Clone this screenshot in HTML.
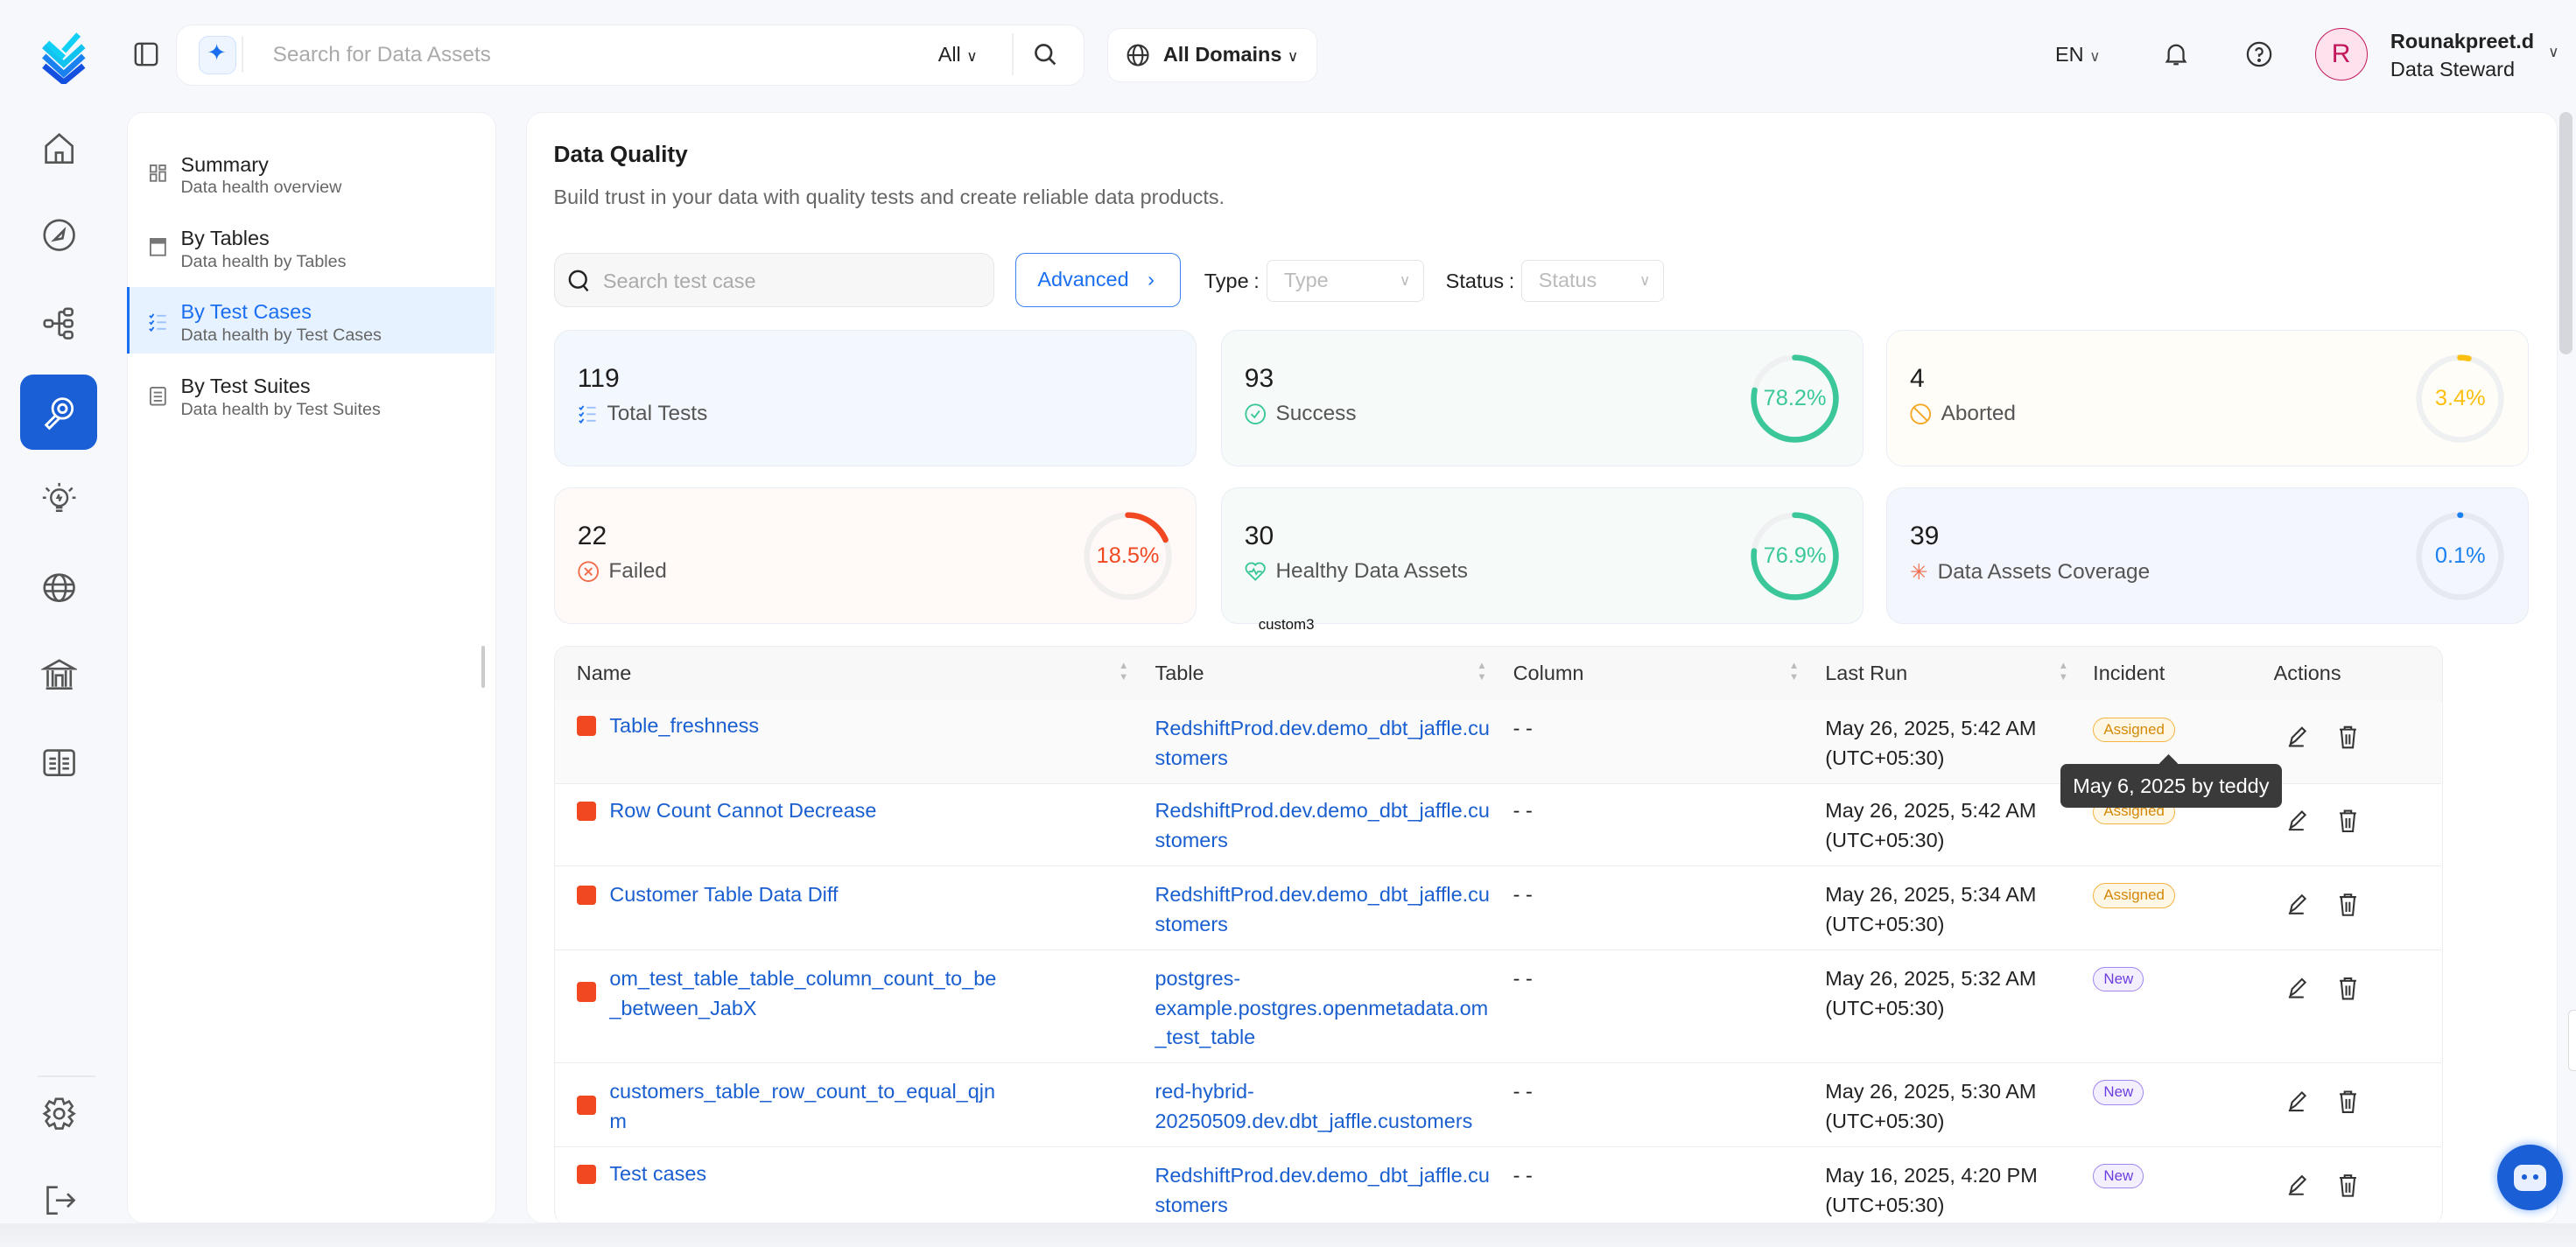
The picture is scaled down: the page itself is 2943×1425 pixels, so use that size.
<!DOCTYPE html>
<html><head><meta charset="utf-8"><style>
html,body{margin:0;padding:0;}
body{width:1568px;height:759px;overflow:hidden;zoom:1.876913;background:#f6f8fc;font-family:"Liberation Sans",sans-serif;color:#222;position:relative;}
.a{position:absolute;}
.ic{position:absolute;width:22px;height:22px;}
svg{display:block}
.box{background:#fff;border-radius:10px;}
.nav-i{left:25px;}
.mi .t{font-size:12.5px;color:#222}
.mi .s{font-size:10.5px;color:#666;margin-top:1px}
.card{position:absolute;border-radius:10px;border:1px solid #e8edf5;height:82px;width:390px;}
.card .n{position:absolute;left:14px;top:20px;font-size:16px;color:#1d1d1d}
.card .l{position:absolute;left:14px;top:43px;font-size:13px;color:#555;display:flex;align-items:center;gap:6px}
.ring{position:absolute;right:13px;top:13px;width:56px;height:56px}
.ring span{position:absolute;left:0;top:0;width:56px;height:56px;line-height:56px;text-align:center;font-size:13.5px}
.th{position:absolute;top:403px;font-size:12.5px;color:#333}
.row{position:absolute;left:338px;width:1148px;border-bottom:1px solid #ececec;font-size:12.5px}
.row .c{position:absolute;top:8px;line-height:18px}
.lk{color:#1a5fd0}
.sq{position:absolute;left:13px;width:12px;height:12px;border-radius:2px;background:#f24822}
.badge{display:inline-block;font-size:9px;padding:1px 6px;border-radius:8px;line-height:12px}
.as{background:#fff7e6;border:1px solid #f5b340;color:#d48806}
.nw{background:#f4efff;border:1px solid #a385f0;color:#6b3fe0}
</style></head><body>

<svg class="a" style="left:21px;top:17px" width="36" height="34" viewBox="0 0 36 34"><path d="M6 11 L18 22 L30 11" fill="none" stroke="#12c3f0" stroke-width="3.5"/><path d="M6 17 L18 28 L30 17" fill="none" stroke="#1a82f0" stroke-width="3.5"/><path d="M6 23 L18 33 L30 23" fill="none" stroke="#1450e0" stroke-width="3.5"/><path d="M8 9 L18 18" stroke="#10d0f5" stroke-width="3.5"/><path d="M18 14 L27 4" stroke="#10d0f5" stroke-width="3.5"/></svg>

<svg class="ic nav-i" style="top:80px" viewBox="0 0 22 22" fill="none" stroke="#555" stroke-width="1.4"><path d="M3 9 L11 2 L19 9 V19 H3Z"/><path d="M9 19 V13 H13 V19"/></svg>
<svg class="ic nav-i" style="top:132px" viewBox="0 0 22 22" fill="none" stroke="#555" stroke-width="1.4"><circle cx="11" cy="11" r="9"/><path d="M8 14 L14 8 L13 13Z"/></svg>
<svg class="ic nav-i" style="top:186px" viewBox="0 0 22 22" fill="none" stroke="#555" stroke-width="1.4"><rect x="2" y="9" width="5" height="4" rx="1.5"/><rect x="14" y="2" width="5" height="4" rx="1.5"/><rect x="14" y="9" width="5" height="4" rx="1.5"/><rect x="14" y="16" width="5" height="4" rx="1.5"/><path d="M7 11 H14 M11 4 V18 M11 4 H14 M11 18 H14"/></svg>
<div class="a" style="left:12px;top:228px;width:47px;height:46px;border-radius:8px;background:#1a5fd6"></div>
<svg class="ic nav-i" style="top:240px" viewBox="0 0 22 22" fill="none" stroke="#fff" stroke-width="1.5"><circle cx="13" cy="9" r="6"/><circle cx="13" cy="9" r="2.5"/><path d="M9 13 L3 19 L5 21 L11 15"/></svg>
<svg class="ic nav-i" style="top:293px" viewBox="0 0 22 22" fill="none" stroke="#555" stroke-width="1.3"><circle cx="11" cy="10" r="5"/><path d="M9 16 H13 M9 18 H13 M11 1 V3 M3 4 L5 6 M19 4 L17 6 M1 10 H3 M19 10 H21 M11 8 L10 10 H12 L11 12"/></svg>
<svg class="ic nav-i" style="top:347px" viewBox="0 0 22 22" fill="none" stroke="#555" stroke-width="1.4"><ellipse cx="11" cy="11" rx="9" ry="8"/><ellipse cx="11" cy="11" rx="4" ry="8"/><path d="M2 9 H20 M2 13 H20"/></svg>
<svg class="ic nav-i" style="top:400px" viewBox="0 0 22 22" fill="none" stroke="#555" stroke-width="1.4"><path d="M2 7 L11 2 L20 7Z M3 19 H19 M4 8 V18 M7 8 V18 M15 8 V18 M18 8 V18 M9 18 V11 H13 V18"/></svg>
<svg class="ic nav-i" style="top:453px" viewBox="0 0 22 22" fill="none" stroke="#555" stroke-width="1.4"><rect x="2" y="4" width="18" height="15" rx="2"/><path d="M11 4 V19 M5 9 H9 M5 12 H9 M5 15 H9 M13 9 H17 M13 12 H17 M13 15 H17"/></svg>
<div class="a" style="left:23px;top:655px;width:35px;height:1px;background:#e6e8ee"></div>
<svg class="ic nav-i" style="top:667px" viewBox="0 0 22 22" fill="none" stroke="#555" stroke-width="1.4"><circle cx="11" cy="11" r="3"/><path d="M9 2 H13 L14 5 L17 3.5 L19 6.5 L17 9 L20 11 L17 13 L19 15.5 L17 18.5 L14 17 L13 20 H9 L8 17 L5 18.5 L3 15.5 L5 13 L2 11 L5 9 L3 6.5 L5 3.5 L8 5Z"/></svg>
<svg class="ic nav-i" style="top:720px" viewBox="0 0 22 22" fill="none" stroke="#555" stroke-width="1.4"><path d="M10 3 H4 V19 H10 M9 11 H20 M16 7 L20 11 L16 15"/></svg>

<svg class="a" style="left:81px;top:25px" width="16" height="16" viewBox="0 0 16 16" fill="none" stroke="#444" stroke-width="1.3"><rect x="1.5" y="1.5" width="13" height="13" rx="2"/><path d="M5.5 1.5 V14.5"/></svg>
<div class="a box" style="left:107px;top:15px;width:552px;height:36px;border:1px solid #eceef3;border-radius:10px"></div>
<div class="a" style="left:121px;top:22px;width:22px;height:22px;border-radius:6px;background:#eef5ff;border:1px solid #cfe3ff"></div>
<div class="a" style="left:126px;top:24px;font-size:14px;color:#1a6ef0">✦</div>
<div class="a" style="left:147px;top:22px;width:1px;height:22px;background:#eee"></div>
<div class="a" style="left:166px;top:26px;font-size:13px;color:#aaa">Search for Data Assets</div>
<div class="a" style="left:571px;top:26px;font-size:12.5px;color:#222">All <span style="font-size:9px">∨</span></div>
<div class="a" style="left:616px;top:20px;width:1px;height:26px;background:#eee"></div>
<svg class="a" style="left:629px;top:26px" width="14" height="14" viewBox="0 0 14 14" fill="none" stroke="#333" stroke-width="1.4"><circle cx="6" cy="6" r="4.7"/><path d="M9.5 9.5 L13 13"/></svg>
<div class="a box" style="left:674px;top:17px;width:127px;height:32px;border:1px solid #eceef3;border-radius:8px"></div>
<svg class="a" style="left:685px;top:26px" width="15" height="15" viewBox="0 0 16 16" fill="none" stroke="#333" stroke-width="1.2"><circle cx="8" cy="8" r="6.5"/><ellipse cx="8" cy="8" rx="3" ry="6.5"/><path d="M1.5 8 H14.5"/></svg>
<div class="a" style="left:708px;top:26px;font-size:12.5px;font-weight:bold;color:#222">All Domains <span style="font-weight:normal;font-size:9px">∨</span></div>
<div class="a" style="left:1251px;top:26px;font-size:12.5px">EN <span style="font-size:9px;color:#555">∨</span></div>
<svg class="a" style="left:1317px;top:25px" width="15" height="16" viewBox="0 0 15 16" fill="none" stroke="#333" stroke-width="1.2"><path d="M3 11 V7 A4.5 4.5 0 0 1 12 7 V11 L13 12.5 H2Z M6 14 H9"/></svg>
<svg class="a" style="left:1367px;top:25px" width="16" height="16" viewBox="0 0 16 16" fill="none" stroke="#333" stroke-width="1.2"><circle cx="8" cy="8" r="7"/><path d="M6 6 A2 2 0 1 1 8 8.3 V9.5"/><circle cx="8" cy="11.7" r=".5" fill="#333"/></svg>
<div class="a" style="left:1409px;top:17px;width:31px;height:31px;border-radius:50%;background:#fde2ee;border:1px solid #c2185b;color:#c2185b;font-size:16px;text-align:center;line-height:31px">R</div>
<div class="a" style="left:1455px;top:18px;font-size:12.5px;font-weight:bold">Rounakpreet.d</div>
<div class="a" style="left:1455px;top:35px;font-size:12.5px;color:#222">Data Steward</div>
<div class="a" style="left:1551px;top:26px;font-size:9px;color:#444">∨</div>

<div class="a box" style="left:77px;top:68px;width:224px;height:676px;border:1px solid #eef0f4"></div>
<div class="a" style="left:77px;top:175px;width:224px;height:40px;background:#e6f2ff;border-left:2px solid #1a6ef0;box-sizing:border-box"></div>
<div class="a mi" style="left:110px;top:93px"><div class="t">Summary</div><div class="s">Data health overview</div></div>
<div class="a mi" style="left:110px;top:138px"><div class="t">By Tables</div><div class="s">Data health by Tables</div></div>
<div class="a mi" style="left:110px;top:183px"><div class="t" style="color:#1a6ef0">By Test Cases</div><div class="s">Data health by Test Cases</div></div>
<div class="a mi" style="left:110px;top:228px"><div class="t">By Test Suites</div><div class="s">Data health by Test Suites</div></div>
<svg class="a" style="left:91px;top:100px" width="10" height="11" viewBox="0 0 10 11" fill="none" stroke="#777"><rect x=".5" y=".5" width="3.5" height="4"/><rect x=".5" y="6" width="3.5" height="4"/><rect x="6" y=".5" width="3.5" height="2.5"/><rect x="6" y="4.5" width="3.5" height="5.5"/></svg>
<svg class="a" style="left:91px;top:145px" width="10" height="11" viewBox="0 0 10 11" fill="none" stroke="#777"><rect x=".5" y=".5" width="9" height="10"/><rect x=".5" y=".5" width="9" height="2.5" fill="#777"/></svg>
<svg class="a" style="left:90px;top:190px" width="12" height="12" viewBox="0 0 12 12" fill="none" stroke="#1a6ef0"><path d="M1 2 L2 3 L3.5 1 M1 6 L2 7 L3.5 5 M1 10 L2 11 L3.5 9"/><path d="M5.5 2 H11 M5.5 6 H11 M5.5 10 H11" stroke="#9cc2fa"/></svg>
<svg class="a" style="left:91px;top:235px" width="10" height="12" viewBox="0 0 10 12" fill="none" stroke="#777"><rect x=".5" y="1" width="9" height="10.5" rx="1"/><path d="M2.5 4 H7.5 M2.5 6.5 H7.5 M2.5 9 H7.5"/></svg>
<div class="a" style="left:293px;top:393px;width:2px;height:26px;background:#ccc;border-radius:1px"></div>

<div class="a box" style="left:320px;top:68px;width:1236px;height:676px;border:1px solid #eef0f4"></div>
<div class="a" style="left:0;top:745px;width:1568px;height:14px;background:linear-gradient(#eceef2,#f3f4f7)"></div>
<div class="a" style="left:1558px;top:68px;width:8px;height:148px;border-radius:4px;background:#d5d7dc"></div>
<div class="a" style="left:337px;top:86px;font-size:14px;font-weight:bold;color:#1d1d1d">Data Quality</div>
<div class="a" style="left:337px;top:113px;font-size:12.5px;color:#666">Build trust in your data with quality tests and create reliable data products.</div>

<div class="a" style="left:337px;top:154px;width:268px;height:33px;border-radius:8px;background:#f7f7f8;border:1px solid #e5e6ea;box-sizing:border-box"></div>
<svg class="a" style="left:346px;top:164px" width="13" height="14" viewBox="0 0 13 14" fill="none" stroke="#222" stroke-width="1.3"><circle cx="6" cy="6" r="5"/><path d="M9.5 10 L12 13"/></svg>
<div class="a" style="left:367px;top:164px;font-size:12.5px;color:#aaa">Search test case</div>
<div class="a" style="left:618px;top:154px;width:101px;height:33px;border-radius:6px;border:1px solid #3a80f0;box-sizing:border-box;color:#1a6ef0;font-size:12.5px;line-height:31px;padding-left:13px">Advanced <span style="margin-left:8px">›</span></div>
<div class="a" style="left:733px;top:164px;font-size:12.5px">Type<span style="margin-left:3px">:</span></div>
<div class="a" style="left:771px;top:158px;width:96px;height:26px;border:1px solid #e2e3e7;border-radius:4px;box-sizing:border-box;font-size:12.5px;color:#bbb;line-height:24px;padding-left:10px">Type<span style="position:absolute;right:8px;font-size:9px">∨</span></div>
<div class="a" style="left:880px;top:164px;font-size:12.5px">Status<span style="margin-left:3px">:</span></div>
<div class="a" style="left:926px;top:158px;width:87px;height:26px;border:1px solid #e2e3e7;border-radius:4px;box-sizing:border-box;font-size:12.5px;color:#bbb;line-height:24px;padding-left:10px">Status<span style="position:absolute;right:8px;font-size:9px">∨</span></div>

<div class="card" style="left:337px;top:201px;background:#f3f7fe">
 <div class="n">119</div>
 <div class="l"><svg width="12" height="12" viewBox="0 0 12 12" fill="none" stroke="#1a6ef0"><path d="M1 2 L2 3 L3.5 1 M1 6 L2 7 L3.5 5 M1 10 L2 11 L3.5 9"/><path d="M5.5 2 H11 M5.5 6 H11 M5.5 10 H11" stroke="#9cc2fa"/></svg>Total Tests</div>
</div>
<div class="card" style="left:743px;top:201px;background:#f6fbf9">
 <div class="n">93</div>
 <div class="l"><svg width="13" height="13" viewBox="0 0 13 13" fill="none" stroke="#3bc79a"><circle cx="6.5" cy="6.5" r="5.8"/><path d="M4 6.5 L6 8.5 L9 4.5"/></svg>Success</div>
 <div class="ring"><svg width="56" height="56" viewBox="0 0 56 56"><circle cx="28" cy="28" r="25" fill="none" stroke="#eef0f2" stroke-width="3.5"/><circle cx="28" cy="28" r="25" fill="none" stroke="#3bc79a" stroke-width="3.5" stroke-linecap="round" stroke-dasharray="122.8 200" transform="rotate(-90 28 28)"/></svg><span style="color:#3bc79a">78.2%</span></div>
</div>
<div class="card" style="left:1148px;top:201px;background:#fffdf8">
 <div class="n">4</div>
 <div class="l"><svg width="13" height="13" viewBox="0 0 13 13" fill="none" stroke="#f5a623"><circle cx="6.5" cy="6.5" r="5.8"/><path d="M2.5 2.5 L10.5 10.5"/></svg>Aborted</div>
 <div class="ring"><svg width="56" height="56" viewBox="0 0 56 56"><circle cx="28" cy="28" r="25" fill="none" stroke="#eef0f2" stroke-width="3.5"/><circle cx="28" cy="28" r="25" fill="none" stroke="#fbbf10" stroke-width="3.5" stroke-linecap="round" stroke-dasharray="5.3 200" transform="rotate(-90 28 28)"/></svg><span style="color:#fbbf10">3.4%</span></div>
</div>
<div class="card" style="left:337px;top:297px;background:#fff9f8">
 <div class="n">22</div>
 <div class="l"><svg width="13" height="13" viewBox="0 0 13 13" fill="none" stroke="#f26b4b"><circle cx="6.5" cy="6.5" r="5.8"/><path d="M4.3 4.3 L8.7 8.7 M8.7 4.3 L4.3 8.7"/></svg>Failed</div>
 <div class="ring"><svg width="56" height="56" viewBox="0 0 56 56"><circle cx="28" cy="28" r="25" fill="none" stroke="#f1eeee" stroke-width="3.5"/><circle cx="28" cy="28" r="25" fill="none" stroke="#f24822" stroke-width="3.5" stroke-linecap="round" stroke-dasharray="29 200" transform="rotate(-90 28 28)"/></svg><span style="color:#f24822">18.5%</span></div>
</div>
<div class="card" style="left:743px;top:297px;background:#f6fbf9">
 <div class="n">30</div>
 <div class="l"><svg width="13" height="13" viewBox="0 0 13 13" fill="none" stroke="#3bc79a"><path d="M6.5 11.5 L1.5 6.5 A3 3 0 0 1 6.5 2.5 A3 3 0 0 1 11.5 6.5Z"/><path d="M2.5 6.5 H4.5 L5.5 5 L7 8 L8 6.5 H10.5"/></svg>Healthy Data Assets</div>
 <div class="ring"><svg width="56" height="56" viewBox="0 0 56 56"><circle cx="28" cy="28" r="25" fill="none" stroke="#eef0f2" stroke-width="3.5"/><circle cx="28" cy="28" r="25" fill="none" stroke="#3bc79a" stroke-width="3.5" stroke-linecap="round" stroke-dasharray="120.8 200" transform="rotate(-90 28 28)"/></svg><span style="color:#3bc79a">76.9%</span></div>
</div>
<div class="card" style="left:1148px;top:297px;background:#f3f6fd">
 <div class="n">39</div>
 <div class="l"><span style="color:#f26b4b;font-size:13px">✳</span>Data Assets Coverage</div>
 <div class="ring"><svg width="56" height="56" viewBox="0 0 56 56"><circle cx="28" cy="28" r="25" fill="none" stroke="#e6e9f0" stroke-width="3.5"/><circle cx="28" cy="28" r="25" fill="none" stroke="#1a80f0" stroke-width="3.5" stroke-linecap="round" stroke-dasharray="0.3 200" transform="rotate(-90 28 28)"/></svg><span style="color:#1a80f0">0.1%</span></div>
</div>
<div class="a" style="left:766px;top:375px;font-size:9px;color:#111">custom3</div>

<div class="a" style="left:337px;top:393px;width:1149px;height:352px;border:1px solid #ececec;border-radius:8px;border-bottom:none;overflow:hidden">
 <div style="height:33px;background:#f8f8f9;border-bottom:1px solid #ececec"></div>
</div>
<div class="th" style="left:351px">Name</div>
<div class="th" style="left:703px">Table</div>
<div class="th" style="left:921px">Column</div>
<div class="th" style="left:1111px">Last Run</div>
<div class="th" style="left:1274px">Incident</div>
<div class="th" style="left:1384px">Actions</div>
<div class="a" style="left:681px;top:402px;font-size:6px;color:#bbb;line-height:7px">▲<br>▼</div>
<div class="a" style="left:899px;top:402px;font-size:6px;color:#bbb;line-height:7px">▲<br>▼</div>
<div class="a" style="left:1089px;top:402px;font-size:6px;color:#bbb;line-height:7px">▲<br>▼</div>
<div class="a" style="left:1253px;top:402px;font-size:6px;color:#bbb;line-height:7px">▲<br>▼</div>

<div class="row" style="top:427px;height:50px;background:#fafafa">
 <div class="sq" style="top:9px"></div><div class="c lk" style="left:33px;top:6px">Table_freshness</div>
 <div class="c lk" style="left:365px">RedshiftProd.dev.demo_dbt_jaffle.cu<br>stomers</div>
 <div class="c" style="left:583px">- -</div>
 <div class="c" style="left:773px">May 26, 2025, 5:42 AM<br>(UTC+05:30)</div>
 <div class="c" style="left:936px;top:7px"><span class="badge as">Assigned</span></div>
</div>
<div class="row" style="top:477px;height:50px">
 <div class="sq" style="top:11px"></div><div class="c lk" style="left:33px;top:8px">Row Count Cannot Decrease</div>
 <div class="c lk" style="left:365px">RedshiftProd.dev.demo_dbt_jaffle.cu<br>stomers</div>
 <div class="c" style="left:583px">- -</div>
 <div class="c" style="left:773px">May 26, 2025, 5:42 AM<br>(UTC+05:30)</div>
 <div class="c" style="left:936px;top:7px"><span class="badge as">Assigned</span></div>
</div>
<div class="row" style="top:528px;height:50px">
 <div class="sq" style="top:11px"></div><div class="c lk" style="left:33px;top:8px">Customer Table Data Diff</div>
 <div class="c lk" style="left:365px">RedshiftProd.dev.demo_dbt_jaffle.cu<br>stomers</div>
 <div class="c" style="left:583px">- -</div>
 <div class="c" style="left:773px">May 26, 2025, 5:34 AM<br>(UTC+05:30)</div>
 <div class="c" style="left:936px;top:7px"><span class="badge as">Assigned</span></div>
</div>
<div class="row" style="top:579px;height:68px">
 <div class="sq" style="top:19px"></div><div class="c lk" style="left:33px">om_test_table_table_column_count_to_be<br>_between_JabX</div>
 <div class="c lk" style="left:365px">postgres-<br>example.postgres.openmetadata.om<br>_test_table</div>
 <div class="c" style="left:583px">- -</div>
 <div class="c" style="left:773px">May 26, 2025, 5:32 AM<br>(UTC+05:30)</div>
 <div class="c" style="left:936px;top:7px"><span class="badge nw">New</span></div>
</div>
<div class="row" style="top:648px;height:50px">
 <div class="sq" style="top:19px"></div><div class="c lk" style="left:33px">customers_table_row_count_to_equal_qjn<br>m</div>
 <div class="c lk" style="left:365px">red-hybrid-<br>20250509.dev.dbt_jaffle.customers</div>
 <div class="c" style="left:583px">- -</div>
 <div class="c" style="left:773px">May 26, 2025, 5:30 AM<br>(UTC+05:30)</div>
 <div class="c" style="left:936px;top:7px"><span class="badge nw">New</span></div>
</div>
<div class="row" style="top:699px;height:45px;border:none;overflow:hidden">
 <div class="sq" style="top:10px"></div><div class="c lk" style="left:33px;top:7px">Test cases</div>
 <div class="c lk" style="left:365px">RedshiftProd.dev.demo_dbt_jaffle.cu<br>stomers</div>
 <div class="c" style="left:583px">- -</div>
 <div class="c" style="left:773px">May 16, 2025, 4:20 PM<br>(UTC+05:30)</div>
 <div class="c" style="left:936px;top:7px"><span class="badge nw">New</span></div>
</div>

<svg class="a" style="left:1392px;top:441px" width="44" height="300" viewBox="0 0 44 300" fill="none" stroke="#333" stroke-width="1.1">
 <g id="r"><path d="M2 12 L3 8 L9 2 L11 4 L5 10Z M1 13 H10"/><path d="M32 3 H42 M35 3 V1.5 H39 V3 M33 3.5 L34 14 H40 L41 3.5 M36 6 V12 M38 6 V12"/></g>
 <use href="#r" y="51"/><use href="#r" y="102"/><use href="#r" y="153"/><use href="#r" y="222"/><use href="#r" y="273"/>
</svg>

<div class="a" style="left:1316px;top:461px;width:8px;height:8px;background:#3a3a3a;transform:rotate(45deg)"></div>
<div class="a" style="left:1254px;top:465px;width:135px;height:27px;background:#3a3a3a;border-radius:4px;color:#fff;font-size:12.5px;line-height:27px;text-align:center">May 6, 2025 by teddy</div>

<div class="a" style="left:1520px;top:697px;width:40px;height:40px;border-radius:50%;background:#1a5fd6;box-shadow:0 0 6px #7fb0ff"></div>
<div class="a" style="left:1530px;top:709px;width:20px;height:16px;border-radius:5px;background:#e8efff"></div>
<div class="a" style="left:1535px;top:715px;width:3px;height:3px;background:#1a5fd6;border-radius:50%"></div>
<div class="a" style="left:1542px;top:715px;width:3px;height:3px;background:#1a5fd6;border-radius:50%"></div>
<div class="a" style="left:1563px;top:615px;width:5px;height:36px;border-radius:3px 0 0 3px;border:1px solid #ddd;background:#fff"></div>
</body></html>
